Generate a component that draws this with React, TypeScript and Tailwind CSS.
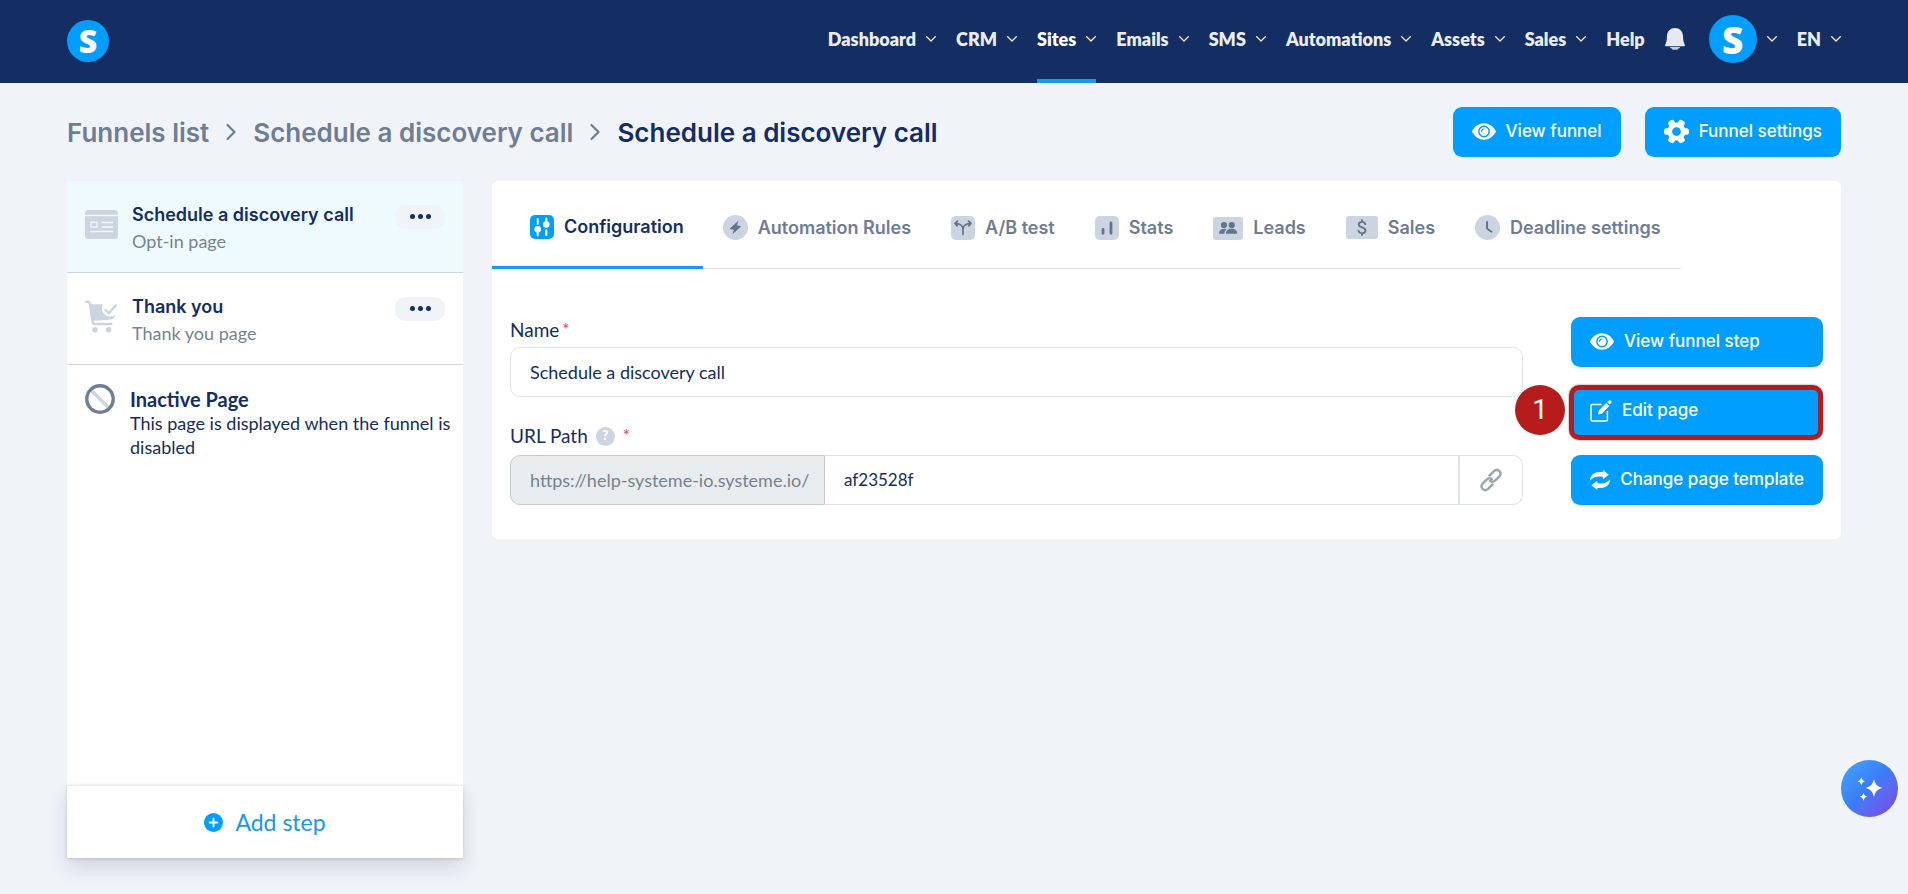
import type { ReactNode } from "react";
import { clsx } from "clsx";

const navItems = ["Dashboard", "CRM", "Sites", "Emails", "SMS", "Automations", "Assets", "Sales"];

export default function App() {
    return <div className="flex min-h-screen flex-col bg-[#f0f4f9] font-['Lato',sans-serif] text-[#142d62]">
        <Header />
        <main className="flex grow flex-col px-[67px] pb-9">
            <div className="flex h-[98px] items-center justify-between">
                <Breadcrumbs />
                <div className="flex gap-6">
                    <BlueButton icon={<EyeIcon />} label="View funnel" />
                    <BlueButton icon={<GearIcon />} label="Funnel settings" />
                </div>
            </div>
            <div className="flex grow items-start gap-[29px]">
                <Sidebar />
                <StepPanel />
            </div>
        </main>
        <button aria-label="Assistant" className="fixed right-[10px] bottom-[77px] flex size-[57px] items-center justify-center rounded-full bg-linear-to-br from-[#45a5fb] via-[#3c7bf8] to-[#7a3fe0]">
            <SparklesIcon />
        </button>
    </div>
}

function Header() {
    return <header className="flex h-[83px] items-start justify-between bg-[#142d62] px-[67px] text-[#e9edf3]">
        <a href="#" aria-label="Home" className="mt-5">
            <Logo className="size-[42px] text-[32px]" />
        </a>
        <nav className="flex h-full items-start gap-5 text-[18px] font-extrabold">
            {
                navItems.map(item => <NavItem key={item} label={item} active={item === "Sites"} />)
            }
            <a href="#" className="flex h-[78px] items-center">Help</a>
            <button aria-label="Notifications" className="flex h-[78px] items-center">
                <BellIcon />
            </button>
            <button aria-label="Account" className="ml-1 flex h-[78px] items-center gap-[10px]">
                <Logo className="size-12 text-[37px]" />
                <ChevronDown />
            </button>
            <button className="flex h-[78px] items-center gap-[10px]">EN<ChevronDown /></button>
        </nav>
    </header>
}

interface NavItemProps {
    label: string;
    active: boolean;
}

function NavItem({label, active}: NavItemProps) {
    return <button className={clsx("flex h-full flex-col justify-between", active && "text-white")}>
        <span className="flex h-[78px] items-center gap-[10px]">{label}<ChevronDown /></span>
        {
            active && <span className="h-1 w-full bg-[#129bf0]" />
        }
    </button>
}

function Logo({className}: { className: string }) {
    return <span className={clsx("flex items-center justify-center rounded-full bg-[#009fff] font-['Open_Sans',sans-serif] leading-none font-extrabold text-white", className)}>
        S
    </span>
}

function Breadcrumbs() {
    return <nav aria-label="Breadcrumb" className="flex items-center gap-[17px] font-['Inter',sans-serif] text-[26px] font-semibold text-[#6e7d95]">
        <a href="#">Funnels list</a>
        <ChevronRight />
        <a href="#">Schedule a discovery call</a>
        <ChevronRight />
        <h1 className="text-[#142d62]">Schedule a discovery call</h1>
    </nav>
}

interface BlueButtonProps {
    icon: ReactNode;
    label: string;
}

function BlueButton({icon, label}: BlueButtonProps) {
    return <button className="flex h-[50px] items-center gap-[10px] rounded-[9px] bg-[#009fff] px-[19px] pb-px font-['Inter',sans-serif] text-[17px] font-medium whitespace-nowrap text-white">
        {icon}
        {label}
    </button>
}

function Sidebar() {
    return <aside className="flex w-[396px] shrink-0 flex-col self-stretch bg-white">
        <StepItem icon={<OptInIcon />} title="Schedule a discovery call" kind="Opt-in page" active />
        <StepItem icon={<CartIcon />} title="Thank you" kind="Thank you page" />
        <div className="flex grow gap-[15px] pt-[19px] pr-2 pl-[18px]">
            <BannedIcon />
            <div className="text-[18px] leading-6">
                <h2 className="pt-[3px] text-[20px] font-bold">Inactive Page</h2>
                <p>This page is displayed when the funnel is disabled</p>
            </div>
        </div>
        <button className="flex h-[73px] items-center justify-center gap-3 border-t border-[#e9edf1] text-[23px] text-[#1798ee] shadow-[0_10px_20px_rgba(20,30,60,0.14),0_1px_3px_rgba(20,30,60,0.15)]">
            <PlusIcon />
            Add step
        </button>
    </aside>
}

interface StepItemProps {
    icon: ReactNode;
    title: string;
    kind: string;
    active?: boolean;
}

function StepItem({icon, title, kind, active}: StepItemProps) {
    return <div className={clsx("flex h-[92px] items-start border-b border-[#ccd4df] px-[18px]", active && "bg-[#effaff]")}>
        <div className="w-[47px] shrink-0 pt-7">{icon}</div>
        <div className="grow pt-[21px] text-[18px] leading-[26px]">
            <h2 className="font-['Inter',sans-serif] font-semibold">{title}</h2>
            <p className="text-[#76838f]">{kind}</p>
        </div>
        <button aria-label={`${title} actions`} className="mt-6 flex h-6 w-[50px] items-center justify-center gap-[3px] rounded-[10px] bg-[#f0f4f9] pb-px">
            <span className="size-[5px] rounded-full bg-[#142d62]" />
            <span className="size-[5px] rounded-full bg-[#142d62]" />
            <span className="size-[5px] rounded-full bg-[#142d62]" />
        </button>
    </div>
}

const tabs = [
    { label: "Configuration", icon: <ConfigIcon /> },
    { label: "Automation Rules", icon: <BoltIcon /> },
    { label: "A/B test", icon: <SplitIcon /> },
    { label: "Stats", icon: <StatsIcon /> },
    { label: "Leads", icon: <LeadsIcon /> },
    { label: "Sales", icon: <DollarIcon /> },
    { label: "Deadline settings", icon: <ClockIcon /> },
]

function StepPanel() {
    return <section className="min-w-0 grow rounded-md bg-white pb-[34px]">
        <div role="tablist" className="flex h-[88px] w-fit items-stretch border-b border-[#dcdfe3] font-['Inter',sans-serif] text-[18px] font-semibold whitespace-nowrap text-[#6e7d95]">
            {
                tabs.map(({label, icon}, i) =>
                    <button
                        key={label}
                        role="tab"
                        aria-selected={i === 0}
                        className={clsx("flex items-center gap-[10px] pt-1.5", i === 0 ? "-mb-px border-b-3 border-[#129bf0] pr-[19px] pl-[38px] text-[#142d62]" : "px-5")}
                    >
                        {icon}
                        {label}
                    </button>
                )
            }
        </div>
        <div className="flex gap-12 px-[18px] pt-12">
            <StepForm />
            <div className="flex w-[252px] shrink-0 flex-col gap-[19px]">
                <BlueButton icon={<EyeIcon />} label="View funnel step" />
                <div className="relative flex flex-col">
                    <BlueButton icon={<EditIcon />} label="Edit page" />
                    <div className="pointer-events-none absolute -top-px right-0 -bottom-1 -left-0.5 rounded-[10px] border-5 border-[#b71c1c] shadow-[0_0_2px_rgba(0,0,0,0.6)]" />
                    <div className="absolute -top-px -left-14 flex size-[50px] items-center justify-center rounded-full bg-[#b71c1c] font-['Roboto',sans-serif] text-[28px] text-white">1</div>
                </div>
                <BlueButton icon={<RefreshIcon />} label="Change page template" />
            </div>
        </div>
    </section>
}

function StepForm() {
    return <form className="min-w-0 grow text-[19px]">
        <div className="mb-0.5 flex h-7 items-center gap-[3px] pb-0.5">
            <label htmlFor="name">Name</label>
            <Required />
        </div>
        <input id="name" defaultValue="Schedule a discovery call" className="h-[50px] w-full rounded-[10px] border border-[#dfe2e6] px-[19px] text-[18px]" />
        <div className="mt-[26px] mb-1 flex h-7 items-center gap-2 pb-0.5">
            <label htmlFor="path">URL Path</label>
            <HelpIcon />
            <Required />
        </div>
        <div className="flex h-[50px] text-[18px]">
            <span className="flex w-[315px] shrink-0 items-center rounded-l-[10px] border border-[#c5cacf] bg-[#e9ecef] pl-[19px] whitespace-nowrap text-[#76838f]">https://help-systeme-io.systeme.io/</span>
            <input id="path" defaultValue="af23528f" className="min-w-0 grow border-y border-[#dfe2e6] px-[19px] text-[17px]" />
            <button type="button" aria-label="Copy link" className="flex w-[65px] items-center justify-center rounded-r-[10px] border border-l-2 border-[#dfe2e6]">
                <LinkIcon />
            </button>
        </div>
    </form>
}

function Required() {
    return <span className="self-start text-[17px] text-[#f0405c]">*</span>
}

function ChevronDown() {
    return <svg width="10" height="6" viewBox="0 0 10 6" fill="none" stroke="currentColor" strokeWidth="1.3" strokeLinecap="round" strokeLinejoin="round"><path d="M.7.7 5 5 9.3.7" /></svg>
}

function ChevronRight() {
    return <svg width="10" height="16" viewBox="0 0 10 16" fill="none" stroke="currentColor" strokeWidth="2.2" strokeLinecap="round" strokeLinejoin="round"><path d="m1.5 1 7 7-7 7" /></svg>
}

function BellIcon() {
    return <svg width="20" height="22" viewBox="0 0 20 22" fill="#e6eaee">
        <path d="M10 0c4.600 0 7.800 3.200 8 7.800.1 4 .5 6.500 1.700 8.600.5 1 .3 1.900-.8 1.900H1.100c-1.100 0-1.300-.9-.8-1.900C1.500 14.300 1.900 11.800 2 7.800 2.200 3.200 5.400 0 10 0Z" />
        <path d="M5.300 19h9.400c.3 0 .4.4.1.900-.2.300-.5.500-.9.500h-.7c-.2.900-.8 1.400-1.700 1.400h-3c-.9 0-1.500-.5-1.700-1.400h-.7c-.4 0-.7-.2-.9-.5-.3-.5-.200-.9.100-.9Z" fill="#c3cddb" />
    </svg>
}

function EyeIcon() {
    return <svg width="24" height="17" viewBox="0 0 26 18">
        <path d="M13 0c5.300 0 9.800 3.200 12.700 8.100.4.600.4 1.200 0 1.800C22.800 14.800 18.300 18 13 18S3.200 14.800.3 9.900c-.4-.6-.4-1.200 0-1.800C3.200 3.200 7.700 0 13 0Z" fill="#fff" />
        <circle cx="13" cy="9" r="5.600" fill="none" stroke="#009fff" strokeWidth="1.600" />
        <circle cx="13" cy="9" r="3.400" fill="#fff" />
        <path d="M13 6.300A2.700 2.700 0 0 0 10.300 9" fill="none" stroke="#009fff" strokeWidth="1.300" strokeLinecap="round" />
    </svg>
}

function GearIcon() {
    return <svg width="25" height="25" viewBox="0 0 24 24">
        <g fill="#fff">
            <circle cx="12" cy="12" r="8.700" />
            <rect x="0" y="8.800" width="24" height="6.400" rx="2.400" />
            <rect x="0" y="8.800" width="24" height="6.400" rx="2.400" transform="rotate(60 12 12)" />
            <rect x="0" y="8.800" width="24" height="6.400" rx="2.400" transform="rotate(120 12 12)" />
        </g>
        <circle cx="12" cy="12" r="4.200" fill="#009fff" />
    </svg>
}

function EditIcon() {
    return <svg width="22" height="22" viewBox="0 0 22 22" fill="none" stroke="#fff">
        <path d="M11.500 4.600H2.200C1.500 4.600 1 5.100 1 5.800V19.700c0 .7.500 1.200 1.200 1.200h14c.7 0 1.200-.5 1.200-1.200V11" strokeWidth="1.500" />
        <path d="m8 14.500 1-4.200 7.300-7.300 3 3-7.300 7.400L8 14.500Z" fill="#fff" stroke="none" />
        <path d="m17.200 2.100 1.400-1.400c.8-.8 1.700-.7 2.400 0s.8 1.600 0 2.400l-1.300 1.400Z" fill="#fff" stroke="none" />
    </svg>
}

function RefreshIcon() {
    return <svg width="22" height="22" viewBox="0 0 22 22" fill="#fff">
        <path d="M0 11.800C.1 5.200 5.500 1.400 14 2.400V0l6.500 5.200L14 10.200V7.600C8 6.400 3.500 7.500 0 11.800Z" />
        <path d="M22 10.200c-.1 6.600-5.500 10.400-14 9.400V22l-6.500-5.200L8 11.800v2.600c6 1.200 10.500.1 14-4.200Z" />
    </svg>
}

function OptInIcon() {
    return <svg width="33" height="30" viewBox="0 0 33 30" className="mt-px">
        <rect width="33" height="29" rx="3.500" fill="#ccd4df" />
        <g fill="none" stroke="#effaff" strokeWidth="1.300">
            <path d="M0 5.500h33M16.500 12.500H28M16.500 17H28M5 21.500h23" />
            <rect x="6" y="12.200" width="6" height="4.800" />
        </g>
    </svg>
}

function CartIcon() {
    return <svg width="32" height="33" viewBox="0 0 32 33" fill="#ccd4df" className="-mt-px">
        <path d="M1.300 1.800h1.500c1.200 0 1.800.5 2 1.600l2.600 18c.2 1.500 1.100 2.600 2.600 2.600h16.400" fill="none" stroke="#ccd4df" strokeWidth="2.400" strokeLinecap="round" />
        <path d="M5.500 4.200h12.300c-2.500 5.600.5 11.600 6.500 12.200 2.600.2 4.500-.6 6-1.900-.5 2.700-1.800 4.500-4.300 5L8 21Z" />
        <path d="m20.500 10 3.300 3.300 7-8" fill="none" stroke="#ccd4df" strokeWidth="2.400" strokeLinecap="round" />
        <circle cx="10" cy="29.700" r="2.800" />
        <circle cx="23.500" cy="29.700" r="2.800" />
    </svg>
}

function BannedIcon() {
    return <svg width="30" height="30" viewBox="0 0 30 30" fill="none" className="shrink-0">
        <path d="m6 6 18 18" stroke="#ccd4df" strokeWidth="3.500" />
        <circle cx="15" cy="15" r="13.200" stroke="#6e7d95" strokeWidth="3.400" />
    </svg>
}

function PlusIcon() {
    return <svg width="19" height="19" viewBox="0 0 19 19">
        <circle cx="9.500" cy="9.500" r="9.500" fill="#009fff" />
        <path d="M9.500 5.600v7.800M5.600 9.500h7.800" stroke="#fff" strokeWidth="1.800" strokeLinecap="round" />
    </svg>
}

function ConfigIcon() {
    return <svg width="24" height="24" viewBox="0 0 24 24">
        <rect width="24" height="24" rx="5" fill="#009fff" />
        <path d="M7.700 4v5M7.700 14v6.500M16.300 3.500V10M16.300 15v5" stroke="#fff" strokeWidth="2" strokeLinecap="round" />
        <circle cx="7.700" cy="14.200" r="3.300" fill="#fff" />
        <circle cx="16.300" cy="9.500" r="3.300" fill="#fff" />
    </svg>
}

function BoltIcon() {
    return <svg width="25" height="25" viewBox="0 0 25 25">
        <circle cx="12.500" cy="12.500" r="12.500" fill="#cbd4e0" />
        <path d="M15.300 5.800 7.200 13.200c-.4.400-.2.900.3 1l3.300.6-1.300 4.500 8.100-7.300c.4-.4.200-.9-.3-1l-3.300-.6Z" fill="#64748d" />
    </svg>
}

function SplitIcon() {
    return <svg width="24" height="24" viewBox="0 0 24 24" fill="none" stroke="#64748d" strokeWidth="1.700" strokeLinecap="round" strokeLinejoin="round">
        <rect width="24" height="24" rx="5" fill="#cbd4e0" stroke="none" />
        <path d="M12 18.500v-5c0-4-2.500-5.800-7.500-6M12 13.500c0-4 2.500-5.800 7.500-6M6.500 5.200 4 7.500l2.200 2.400M17.500 5.200 20 7.500l-2.200 2.400" />
    </svg>
}

function StatsIcon() {
    return <svg width="24" height="24" viewBox="0 0 24 24">
        <rect width="24" height="24" rx="5" fill="#cbd4e0" />
        <path d="M8 13.500v3.800M16 7v10.300" stroke="#64748d" strokeWidth="2.800" strokeLinecap="round" />
    </svg>
}

function LeadsIcon() {
    return <svg width="30" height="24" viewBox="0 0 30 24">
        <rect y="1" width="30" height="23" rx="3" fill="#cbd4e0" />
        <g fill="#64748d">
            <circle cx="11" cy="9" r="3.100" />
            <circle cx="18.700" cy="9" r="3.100" />
            <path d="M12.800 17.800c.1-3.200 2.300-5 5.700-5s5.600 1.800 5.700 5Z" />
            <path d="M6 17.800c.1-3 1.900-5 5.200-5 .9 0 1.800.2 2.400.5-1.300 1-2.200 2.600-2.300 4.500Z" />
        </g>
    </svg>
}

function DollarIcon() {
    return <svg width="32" height="23" viewBox="0 0 32 23" fill="none" stroke="#64748d" strokeWidth="1.800" strokeLinecap="round">
        <rect width="32" height="23" rx="3" fill="#cbd4e0" stroke="none" />
        <path d="M19.300 8.200c-.4-1.600-1.600-2.400-3.300-2.400-1.900 0-3.300 1-3.300 2.700 0 3.700 6.800 2 6.800 5.900 0 1.700-1.500 2.800-3.500 2.800s-3.200-.9-3.600-2.600M16 4v1.800M16 17.200V19" />
    </svg>
}

function ClockIcon() {
    return <svg width="25" height="25" viewBox="0 0 25 25" fill="none">
        <circle cx="12.500" cy="12.500" r="12.500" fill="#cbd4e0" />
        <path d="M12 7v5.500c0 .8.3 1.300.9 1.800l3.600 2.500" stroke="#64748d" strokeWidth="2" strokeLinecap="round" />
    </svg>
}

function HelpIcon() {
    return <span role="img" aria-label="Help" className="flex size-[19px] items-center justify-center rounded-full bg-[#ccd5e1] text-[13px] font-black text-white">?</span>
}

function LinkIcon() {
    return <svg width="24" height="24" viewBox="0 0 24 24" fill="none" stroke="#9ea6ae" strokeWidth="2.500" strokeLinecap="round">
        <path d="M10.500 7.500 15 3.200c1.700-1.600 3.900-1.500 5.400 0s1.500 3.700-.1 5.300l-4 3.900c-1.600 1.600-3.600 1.700-5.200.4" />
        <path d="M13.500 16.500 9 20.800c-1.700 1.600-3.900 1.500-5.400 0s-1.500-3.700.1-5.300l4-3.900c1.600-1.600 3.600-1.700 5.200-.4" />
    </svg>
}

function SparklesIcon() {
    return <svg width="26" height="24" viewBox="0 0 26 24" fill="#fff">
        <path d="M17 2c1.200 5.300 3.200 7.400 8.500 9-5.300 1.500-7.300 3.700-8.500 9-1.200-5.300-3.200-7.500-8.500-9C13.800 9.400 15.800 7.300 17 2Z" />
        <path d="M4.300.3C5 2.700 5.800 3.600 8.200 4.300 5.800 5 5 5.900 4.300 8.200 3.600 5.900 2.800 5 .4 4.300 2.800 3.600 3.600 2.700 4.300.3ZM6.500 15.800c.7 2.400 1.500 3.300 3.900 4-2.400.7-3.200 1.600-3.900 4-.7-2.400-1.500-3.300-3.900-4 2.400-.7 3.200-1.600 3.900-4Z" />
    </svg>
}
